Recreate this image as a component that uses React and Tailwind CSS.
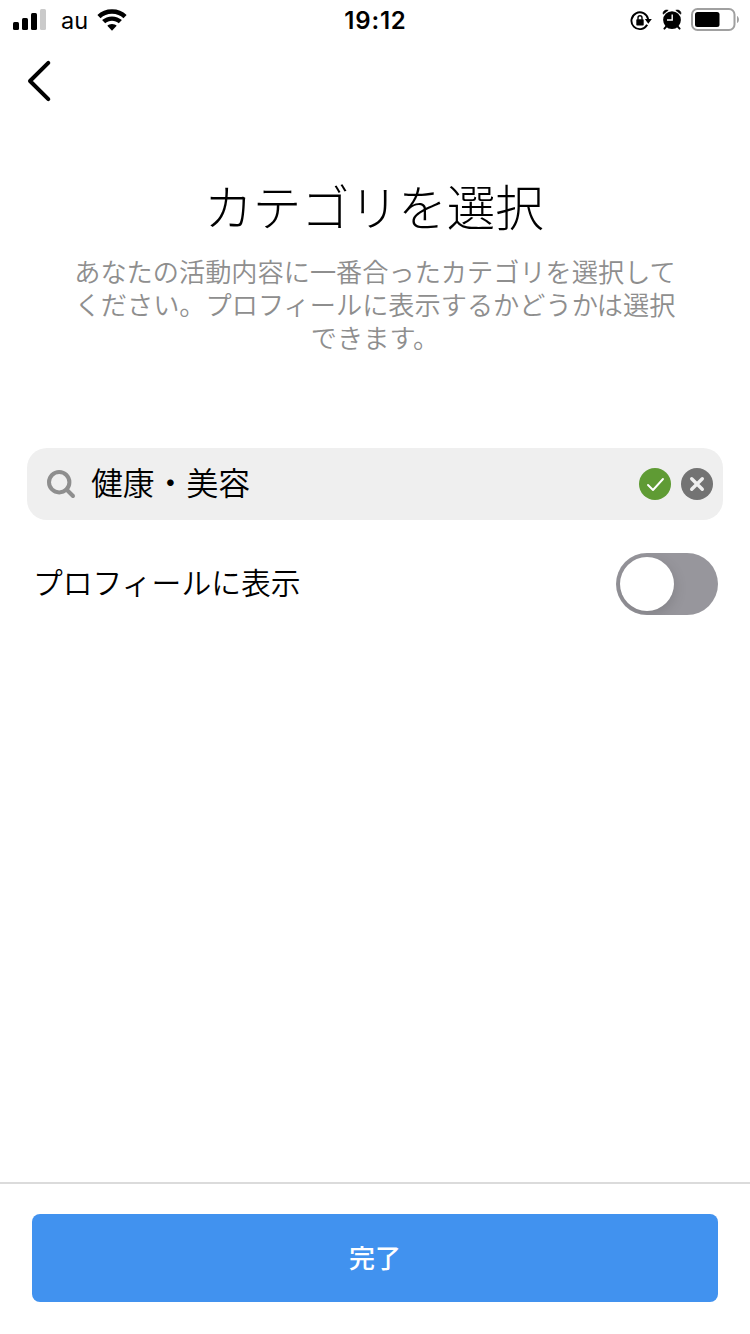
import React, { useState } from 'react';

function SignalIcon() {
  return (
    <svg width="34" height="22" viewBox="0 0 34 22" className="block">
      <rect x="0" y="13" width="6" height="8" rx="1.5" />
      <rect x="9" y="9" width="6" height="12" rx="1.5" />
      <rect x="18" y="4" width="6" height="17" rx="1.5" />
      <rect x="27" y="0" width="6" height="21" rx="1.5" fill="#cacaca" />
    </svg>
  );
}

function WifiIcon() {
  return (
    <svg width="30" height="22" viewBox="0 0 30 22" className="block">
      <path d="M15 0.3C20.8 0.3 25.9 2.3 29.6 5.9L26.5 9.2C23.4 6.3 19.6 4.7 15 4.7S6.6 6.3 3.5 9.2L0.4 5.9C4.1 2.3 9.2 0.3 15 0.3Z" />
      <path d="M15 7.4C18.8 7.4 22.3 8.8 24.9 11.1L21.8 14.3C20 12.7 17.6 11.8 15 11.8S10 12.7 8.2 14.3L5.1 11.1C7.7 8.8 11.2 7.4 15 7.4Z" />
      <path d="M15 14.9C17 14.9 18.6 15.6 19.7 16.7L15 21.7L10.3 16.7C11.4 15.6 13 14.9 15 14.9Z" />
    </svg>
  );
}

function RotationLockIcon() {
  return (
    <svg width="22" height="20" viewBox="0 0 22 20" className="block">
      <path d="M17.2 13.8A8.4 8.4 0 1 1 18.1 8.2" fill="none" stroke="black" strokeWidth="1.9" />
      <path d="M14.8 7.9H21.8L18.3 12.8Z" />
      <rect x="6.3" y="8.2" width="7.4" height="6.2" rx="0.7" />
      <path d="M8 8.8V6.8A2 2 0 0 1 12 6.8V8.8" fill="none" stroke="black" strokeWidth="1.4" />
    </svg>
  );
}

function AlarmIcon() {
  return (
    <svg width="20" height="22" viewBox="0 0 20 22" className="block">
      <circle cx="10" cy="11.1" r="8.9" />
      <path d="M1.2 5.2C0.4 2.6 3.2 0.2 6.2 1.3ZM18.8 5.2C19.6 2.6 16.8 0.2 13.8 1.3Z" stroke="black" strokeWidth="0.6" />
      <path d="M4.4 17.4L2.4 19.6M15.6 17.4L17.6 19.6" stroke="black" strokeWidth="2" strokeLinecap="round" />
      <path d="M10.2 5.5V11H5" fill="none" stroke="white" strokeWidth="1.4" />
    </svg>
  );
}

function BatteryIcon() {
  return (
    <svg width="49" height="24" viewBox="0 0 49 24" className="block">
      <rect x="1" y="1" width="42.5" height="21" rx="5.5" fill="none" stroke="#a0a0a0" strokeWidth="2" />
      <rect x="4" y="4" width="24.5" height="15" rx="2.5" />
      <path d="M46 8C48.6 9 48.6 14 46 15Z" fill="#a0a0a0" />
    </svg>
  );
}

function StatusBar() {
  return (
    <div className="grid h-10 grid-cols-[1fr_auto_1fr] pl-[11px] pr-[10px] font-['Inter',sans-serif]">
      <div className="flex items-start pl-[2px] pt-[9px]">
        <SignalIcon />
        <span className="ml-[14px] w-[36px] text-[23.5px] leading-6">au</span>
        <WifiIcon />
      </div>
      <div className="pt-[9px] text-center text-[24px] font-semibold leading-6 tracking-[0.8px]">19:12</div>
      <div className="flex items-start justify-end pt-2">
        <div className="mr-[10px] pt-[3px]"><RotationLockIcon /></div>
        <div className="mr-[9px] pt-px"><AlarmIcon /></div>
        <BatteryIcon />
      </div>
    </div>
  );
}

function App() {
  const [category, setCategory] = useState('健康・美容');
  const [showOnProfile, setShowOnProfile] = useState(false);

  return (
    <div className="flex h-[1334px] w-[750px] flex-col bg-white font-['Noto_Sans_CJK_JP',sans-serif] text-black">
      <StatusBar />

      <header className="h-[137px] pl-[26px] pt-[19px]">
        <button className="block" aria-label="戻る">
          <svg width="26" height="44" viewBox="0 0 26 44" className="block">
            <path d="M22.3 3.8L4 22L22.3 40.2" fill="none" stroke="black" strokeWidth="4" strokeLinecap="round" strokeLinejoin="round" />
          </svg>
        </button>
      </header>

      <main className="flex-1">
        <h1 className="pr-[2px] text-center text-[48.5px] font-light leading-[56px]">カテゴリを選択</h1>
        <p className="mx-auto mt-[22px] w-[606px] text-center text-[26.2px] font-[350] leading-[33px] text-[#8e8e8e]">
          あなたの活動内容に一番合ったカテゴリを選択して
          <br />
          ください。プロフィールに表示するかどうかは選択
          <br />
          できます。
        </p>

        {/* Search field */}
        <div className="ml-[27px] mr-[27px] mt-[94px] flex h-[72px] items-center rounded-[20px] bg-[#efefef] pl-[19px] pr-[10px]">
          <svg width="30" height="30" viewBox="0 0 30 30" className="block" fill="none" stroke="#8e8e8e" strokeWidth="4">
            <circle cx="13.2" cy="13.2" r="10.2" />
            <path d="M20.5 20.5L27 27" strokeLinecap="round" />
          </svg>
          <input
            value={category}
            onChange={(e) => setCategory(e.target.value)}
            className="ml-[15px] h-12 min-w-0 flex-1 bg-transparent pb-[6px] text-[31.8px] font-[350] outline-none"
          />
          <svg width="32" height="32" viewBox="0 0 32 32" className="block">
            <circle cx="16" cy="16" r="16" fill="#5f9b34" />
            <path d="M9 17L14 22L24 11" fill="none" stroke="white" strokeWidth="1.9" strokeLinecap="round" strokeLinejoin="round" />
          </svg>
          <button className="ml-[10px]" onClick={() => setCategory('')} aria-label="クリア">
            <svg width="32" height="32" viewBox="0 0 32 32" className="block">
              <circle cx="16" cy="16" r="16" fill="#737373" />
              <path d="M10.7 10.7L21.3 21.3M21.3 10.7L10.7 21.3" stroke="#efefef" strokeWidth="3.4" strokeLinecap="round" />
            </svg>
          </button>
        </div>

        {/* Profile toggle */}
        <div className="mt-[33px] flex h-[62px] items-center justify-between pl-[33px] pr-8">
          <span className="pb-[6px] text-[29.8px] font-[350] leading-[44px]">プロフィールに表示</span>
          <button
            role="switch"
            aria-checked={showOnProfile}
            onClick={() => setShowOnProfile(!showOnProfile)}
            className={`${
              showOnProfile ? 'justify-end bg-[#4192ef]' : 'justify-start bg-[#97969c]'
            } flex h-[62px] w-[102px] items-center overflow-hidden rounded-full px-1`}
          >
            <span className="size-[54px] rounded-full bg-white shadow-[0_4px_14px_rgba(0,0,0,0.15)]" />
          </button>
        </div>
      </main>

      <footer className="h-[152px] border-t-2 border-[#dbdbdb] px-8 pt-[30px]">
        <button className="block h-[88px] w-full rounded-lg bg-[#4192ef] pb-[2px] text-[26px] font-medium leading-[86px] text-white">
          完了
        </button>
      </footer>
    </div>
  );
}

export default App;
